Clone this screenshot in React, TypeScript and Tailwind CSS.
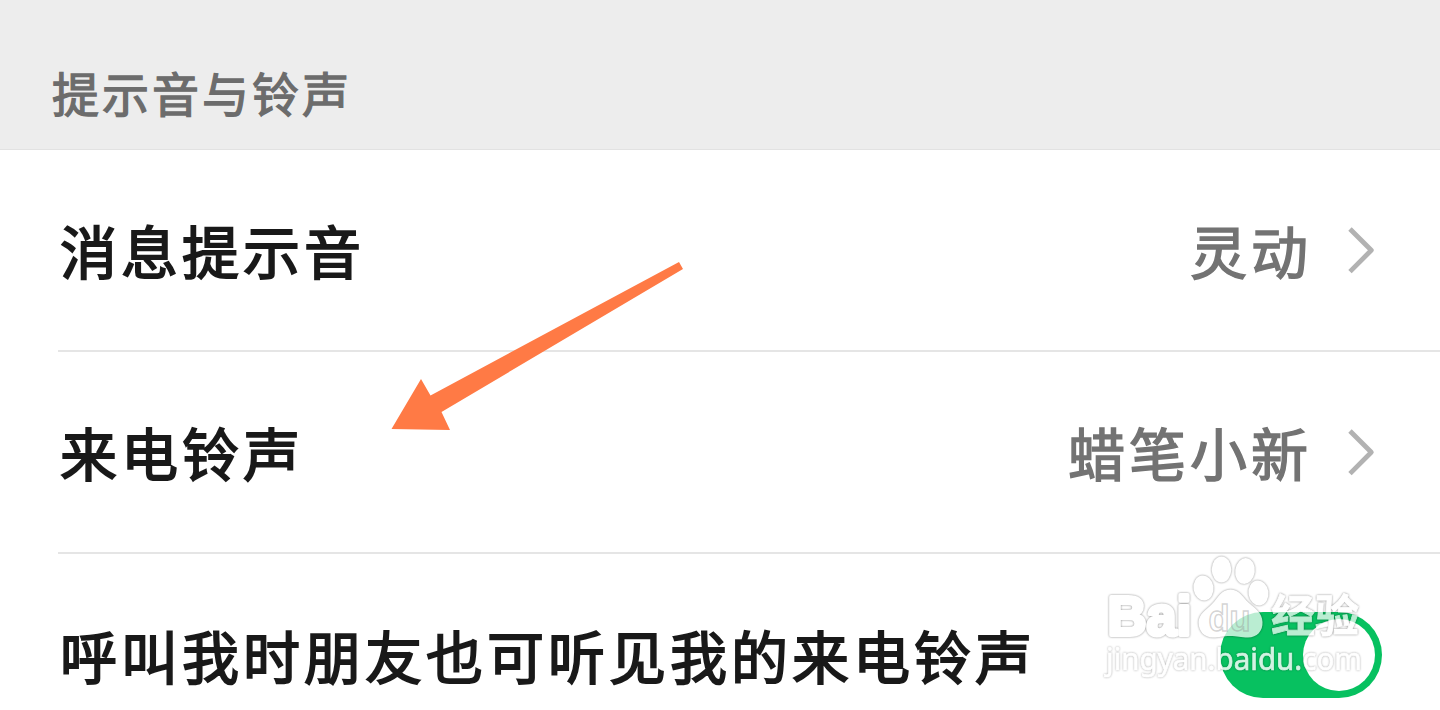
import React from 'react';

const IconChevron: React.FC = () => (
    <svg width="30" height="50" viewBox="0 0 30 50" fill="none" className="shrink-0">
        <path d="M4 4 L25.3 25.3 L4 46.600" stroke="#b2b2b2" strokeWidth="4.8" strokeLinejoin="round" />
    </svg>
);

const IconArrow: React.FC = () => (
    <svg width="294" height="170" viewBox="0 0 294 170" className="absolute left-[390px] top-[261px]">
        <path d="M289 1 L293 8 L51.5 151 L60 169 L1.5 168 L31 118 L40.5 134.500 Z" fill="#ff7a45" />
    </svg>
);

const Watermark: React.FC = () => (
    <svg width="320" height="165" viewBox="0 0 320 165" className="pointer-events-none absolute bottom-0 right-[30px]">
        {/* logo */}
        <g fill="#ffffff" opacity="0.72" className="[filter:drop-shadow(0_0_1px_rgba(0,0,0,0.6))]">
            <ellipse cx="113.500" cy="43" rx="10" ry="12.500" transform="rotate(-8 113.500 43)" />
            <ellipse cx="131.500" cy="24.500" rx="9.800" ry="13" />
            <ellipse cx="155" cy="26" rx="9.800" ry="13" transform="rotate(8 155 26)" />
            <ellipse cx="168.500" cy="48" rx="10" ry="12.500" transform="rotate(-8 168.500 48)" />
            <path d="M140.500 44.500 C150 44.500 153 53 159 58 C166 64 172 68 172.500 77 C173 86 167 92.500 158 92.500 C151 92.500 147 91 140 91 C133 91 129 92.500 123 92.500 C114 92.500 108.500 86 108.500 77 C109 69 116 65 122 59 C128 53 131 44.500 140.500 44.500 Z" />
            <g stroke="#ffffff" strokeLinejoin="round">
                <text x="17.500" y="90" fontSize="56" fontWeight="700" textLength="84" lengthAdjust="spacingAndGlyphs" strokeWidth="4" className="font-['Liberation_Sans',sans-serif]">Bai</text>
                <text x="181" y="87" fontSize="44" fontWeight="700" textLength="88" lengthAdjust="spacingAndGlyphs" strokeWidth="0.8" className="font-['Noto_Sans_CJK_SC',sans-serif]">经验</text>
            </g>
        </g>
        <text x="118.500" y="85.500" fontSize="37" fontWeight="700" textLength="42" lengthAdjust="spacingAndGlyphs" fill="none" stroke="#909090" strokeOpacity="0.4" strokeWidth="1.5" className="font-['Liberation_Sans',sans-serif]">du</text>

        {/* address */}
        <text
            x="16"
            y="125"
            fontSize="31"
            textLength="256"
            lengthAdjust="spacingAndGlyphs"
            fill="#ffffff"
            stroke="#ffffff"
            strokeWidth="0.7"
            opacity="0.82"
            className="font-['Noto_Sans',sans-serif] [filter:drop-shadow(0_0_1px_rgba(0,0,0,0.4))]"
        >
            jingyan.baidu.com
        </text>
    </svg>
);

const labelClass = 'pb-[2px] text-[57px] leading-none tracking-[4px] whitespace-nowrap';

const ValueRow: React.FC<{ label: string; value: string }> = ({ label, value }) => (
    <div className="flex h-[202px] items-center justify-between border-b-2 border-[#e5e5e5] pl-[2px] pr-[64px]">
        <span className={`${labelClass} text-[#191919] [-webkit-text-stroke:1.8px_#191919]`}>{label}</span>
        <div className="flex items-center gap-[34px]">
            <span className={`${labelClass} text-[#737373] [-webkit-text-stroke:1.5px_#737373]`}>{value}</span>
            <IconChevron />
        </div>
    </div>
);

export default function App() {
    return (
        <div className="relative flex h-[710px] w-[1440px] flex-col overflow-hidden bg-white font-['Noto_Sans_CJK_SC',sans-serif]">
            <div className="flex h-[150px] shrink-0 items-end border-b border-[#e2e2e2] bg-[#ededed] pb-[34px] pl-[52px]">
                <h2 className="text-[47px] leading-none tracking-[3px] text-[#6c6c6c] [-webkit-text-stroke:1.3px_#6c6c6c]">提示音与铃声</h2>
            </div>

            <div className="flex shrink-0 flex-col pl-[58px]">
                <ValueRow label="消息提示音" value="灵动" />
                <ValueRow label="来电铃声" value="蜡笔小新" />

                <div className="flex h-[202px] items-center justify-between pl-[2px] pr-[58px]">
                    <span className={`${labelClass} text-[#191919] [-webkit-text-stroke:1.8px_#191919]`}>呼叫我时朋友也可听见我的来电铃声</span>
                    <button className="flex h-[86px] w-[162px] items-center justify-end rounded-full bg-[#07c160] pr-[7px]">
                        <span className="size-[72px] rounded-full bg-white" />
                    </button>
                </div>
            </div>

            <IconArrow />
            <Watermark />
        </div>
    );
}
